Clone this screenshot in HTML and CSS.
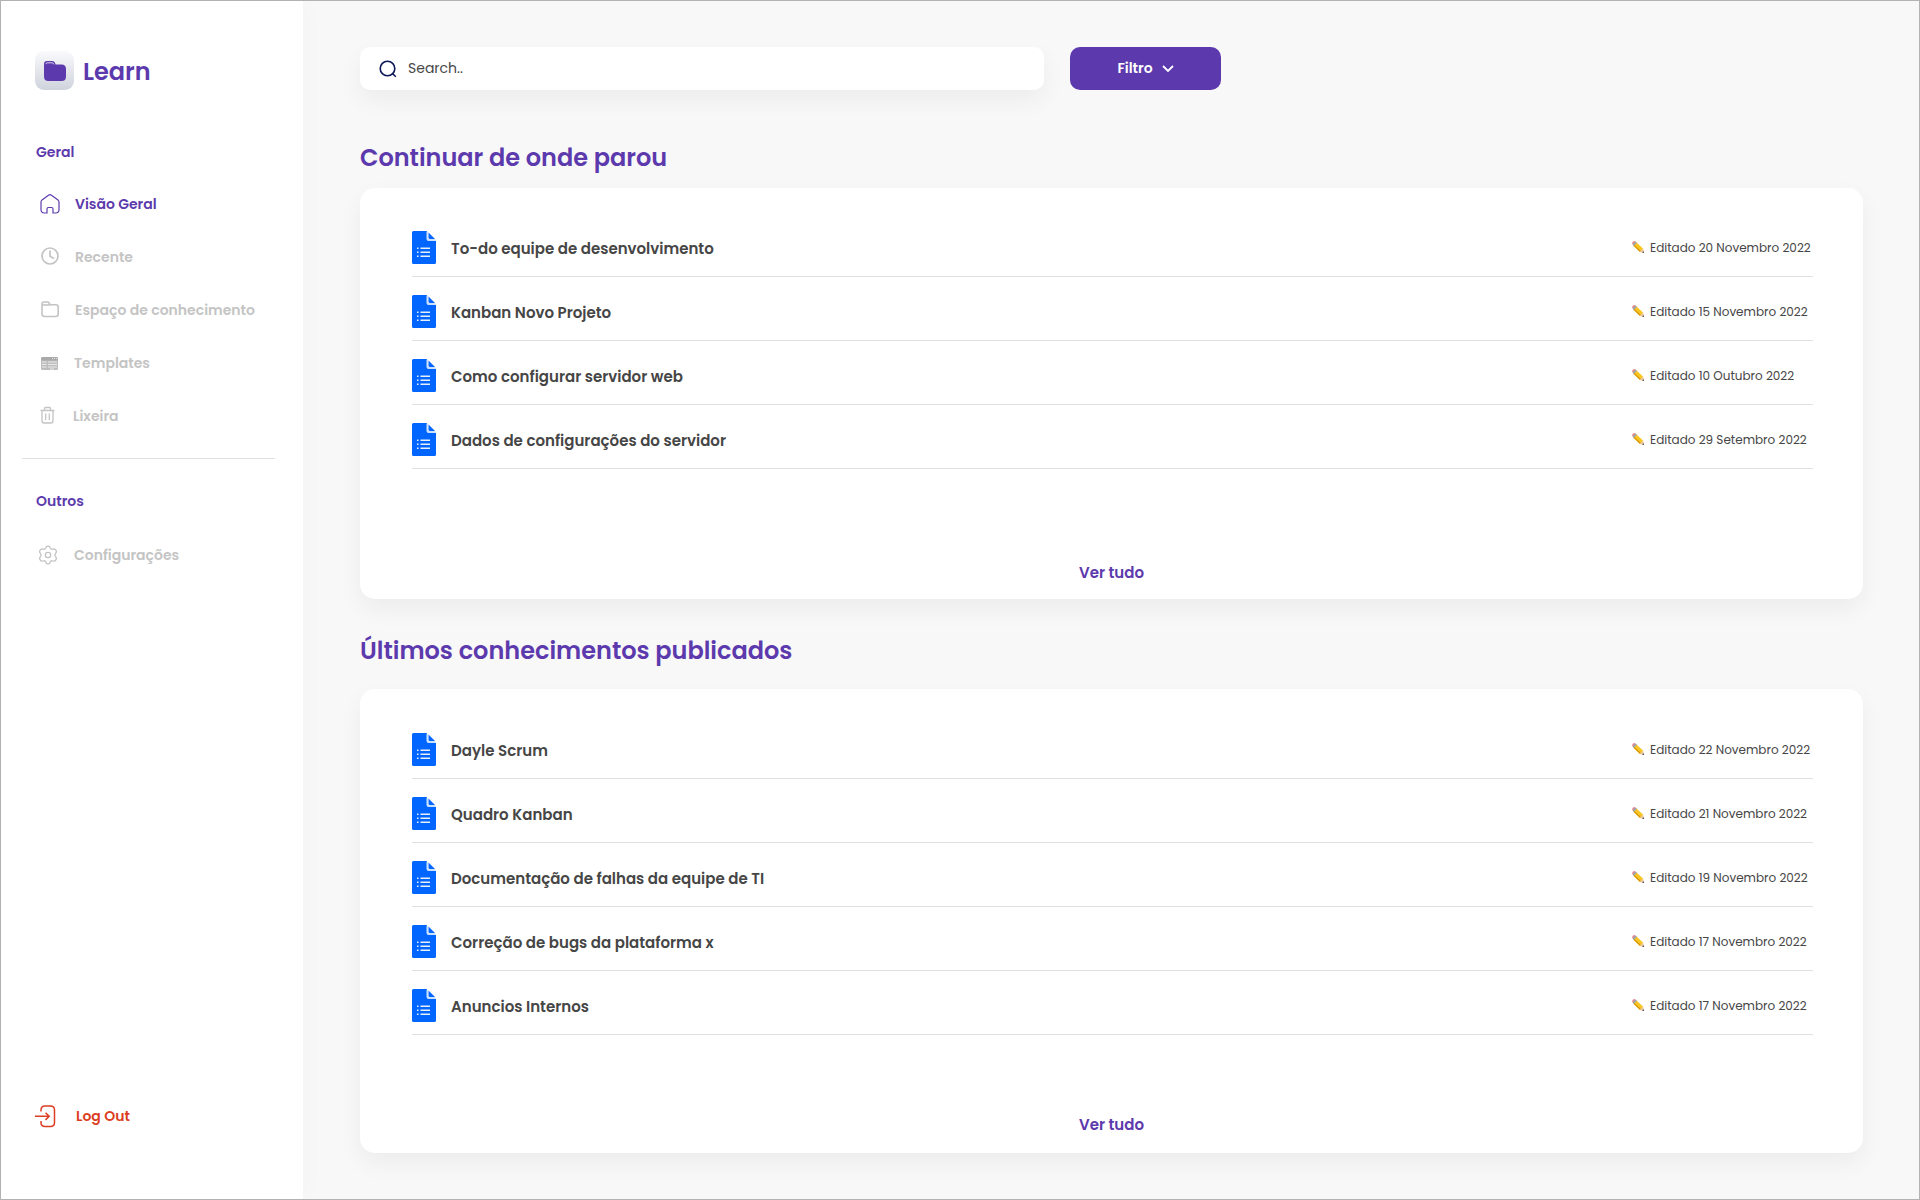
FILE: index.html
```html
<!DOCTYPE html>
<html lang="pt-BR">
<head>
<meta charset="utf-8">
<meta name="viewport" content="width=device-width, initial-scale=1">
<title>Learn</title>
<link rel="stylesheet" href="styles.css">
</head>
<body>
<svg class="sprite" aria-hidden="true">
  <symbol id="doc" viewBox="0 0 24 33">
    <path fill="#0066ff" d="M1.500 0H15v8.500L16.500 10H24v21.500a1.500 1.500 0 0 1-1.500 1.500h-21A1.500 1.500 0 0 1 0 31.500v-30A1.500 1.500 0 0 1 1.500 0z"/>
    <path fill="#cce0ff" d="M14.500 0.500v7q0 2.500 2.500 2.500h7L23 8h-5.500Q16 8 16 6.500V1z"/>
    <path fill="#0066ff" d="M16.500 1.500L23 8h-5q-1.500 0-1.500-1.500z"/>
    <path stroke="#e6f0ff" stroke-width="1.500" d="M5 17.300h1.500M8.500 17.300H18M5 21.300h1.500M8.500 21.300H18M5 25.300h1.500M8.500 25.300H18"/>
  </symbol>
  <symbol id="pencil" viewBox="0 0 12 12">
    <path fill="#e58a94" d="M.6 3.400Q-.4 2 .8.800T3.400.500L4.600 1.500 1.600 4.500z"/>
    <path fill="#9aa5ad" d="M3.500.6l1.900 1.600-3.200 3.200L.7 3.700z"/>
    <path fill="#f9c623" d="M4.900 1.700l6.300 6L8 11 1.700 4.900z"/>
    <path fill="#d99a12" d="M1.700 4.900l.9-.9 6.300 6.100L8 11z"/>
    <path fill="#e8c09a" d="M11.200 7.700l.8 4.300-4-1z"/>
    <path fill="#333" d="M11.700 10.200l.3 1.800-1.800-.4z"/>
  </symbol>
</svg>

<div class="app">
  <aside class="sidebar">
    <a class="brand" href="#">
      <span class="brand-mark">
        <svg width="22" height="20" viewBox="0 0 22 20"><path fill="#5c3aad" d="M3 0h5.500q1.700 0 2.300 1.500l.9 2H17.500Q22 3.500 22 8v7.500Q22 20 17.500 20h-13Q0 20 0 15.500V3Q0 0 3 0z"/><path fill="none" stroke="#d9d2ec" d="M2 3.200q0-1.400 1.200-1.400h5q1.200 0 1.600 1.600"/></svg>
      </span>
      <span class="brand-name">Learn</span>
    </a>

    <nav class="menu">
      <h3 class="menu-title">Geral</h3>
      <ul class="menu-list">
        <li><a class="menu-link active" href="#">
          <svg width="20" height="20" viewBox="0 0 20 20" fill="none" stroke="currentColor" stroke-width="1.200"><path d="M7 19H4.500Q1 19 1 15.500V8q0-1.300 1-2.100l6.500-4.700q1.500-1 3 0L18 5.900q1 .8 1 2.100v7.500q0 3.500-3.500 3.500H13v-4q0-1.500-1.500-1.500h-3Q7 13.500 7 15z"/></svg>
          Visão Geral</a></li>
        <li><a class="menu-link" href="#">
          <svg width="20" height="20" viewBox="0 0 20 20" fill="none" stroke="currentColor" stroke-width="1.700"><circle cx="10" cy="9" r="8"/><path d="M10 4v5.200l3.500 2" stroke-linecap="round"/></svg>
          Recente</a></li>
        <li><a class="menu-link" href="#">
          <svg width="20" height="20" viewBox="0 0 20 20" fill="none" stroke="currentColor" stroke-width="1.600"><path d="M2 6V4q0-2 2-2h3.500q1 0 1.500 1l1 1.700h6q2.200 0 2.200 2.300v7q0 2.500-2.500 2.500H4.500Q2 16.500 2 14z"/><path d="M2 5h8"/></svg>
          Espaço de conhecimento</a></li>
        <li><a class="menu-link" href="#">
          <svg width="19" height="20" viewBox="0 0 19 20"><rect x="1" y="4" width="17" height="13" rx="1.500" fill="#bdbdbd"/><path d="M1 7.500v-2Q1 4 2.500 4h14Q18 4 18 5.500v2z" fill="#a9a9a9"/><path stroke="#fff" stroke-width=".7" d="M12 5.500h1M14 5.500h1M16 5.500h1M2 9h4.500M2 11.500h4.500M2 14h4.500M8 9h9M8 11.500h9M8 14h9M10 16h4"/></svg>
          Templates</a></li>
        <li><a class="menu-link" href="#">
          <svg width="18" height="20" viewBox="0 0 18 20" fill="none" stroke="currentColor" stroke-width="1.300"><path d="M0.500 4.500h14M4.500 4V2.500q0-1 1-1h4q1 0 1 1V4M2 4.500V15q0 2 2 2h7q2 0 2-2V4.500M5.700 7.500v6.500M9.300 7.500v6.500"/></svg>
          Lixeira</a></li>
      </ul>
    </nav>

    <nav class="menu menu-secondary">
      <h3 class="menu-title">Outros</h3>
      <ul class="menu-list">
        <li><a class="menu-link" href="#">
          <svg width="20" height="20" viewBox="0 0 20 20" fill="none" stroke="currentColor" stroke-width="1.300"><circle cx="9" cy="10" r="2.700"/><path d="M7.300 1.800q1.700-1.400 3.400 0l.7 1.700q.7 1 2 .7l1.700-.3q1.700.2 2.300 2.300.2 1.100-.8 2.100-1.300 1.700 0 3.400 1 1 .8 2.100-.6 2.100-2.300 2.300l-1.700-.3q-1.300-.3-2 .7l-.7 1.700q-1.700 1.400-3.400 0l-.7-1.700q-.7-1-2-.7l-1.700.3Q1.200 15.900.6 13.800q-.2-1.100.8-2.100 1.300-1.700 0-3.400-1-1-.8-2.100.6-2.100 2.300-2.300l1.700.3q1.300.3 2-.7z"/></svg>
          Configurações</a></li>
      </ul>
    </nav>

    <button class="logout" type="button">
      <svg width="22" height="24" viewBox="0 0 22 24" fill="none" stroke="currentColor" stroke-width="1.500"><path d="M6 7.500V6q0-4 4-4h5.500q4 0 4 4v12.500q0 4-4 4H10q-4 0-4-4V17M0 12.300h14M10.500 8.700l3.700 3.600-3.700 3.600"/></svg>
      Log Out
    </button>
  </aside>

  <main class="main">
    <form class="toolbar" role="search">
      <label class="search">
        <svg width="18" height="18" viewBox="0 0 18 18" fill="none" stroke="#0b1757" stroke-width="1.600"><circle cx="8.500" cy="8.500" r="7.300"/><path d="M13.500 13.500l3.300 3.300"/></svg>
        <input type="search" placeholder="Search.." aria-label="Search">
      </label>
      <button class="filter" type="button">Filtro
        <svg width="12" height="8" viewBox="0 0 12 8" fill="none" stroke="currentColor" stroke-width="1.800"><path d="M1 1l5 5 5-5"/></svg>
      </button>
    </form>

    <section class="section">
      <h2 class="section-title">Continuar de onde parou</h2>
      <div class="card">
        <ul class="docs">
          <li class="doc"><svg class="doc-icon"><use href="#doc"/></svg><a class="doc-name" href="#">To-do equipe de desenvolvimento</a><span class="doc-date"><svg class="pencil"><use href="#pencil"/></svg>Editado 20 Novembro 2022</span></li>
          <li class="doc"><svg class="doc-icon"><use href="#doc"/></svg><a class="doc-name" href="#">Kanban Novo Projeto</a><span class="doc-date"><svg class="pencil"><use href="#pencil"/></svg>Editado 15 Novembro 2022</span></li>
          <li class="doc"><svg class="doc-icon"><use href="#doc"/></svg><a class="doc-name" href="#">Como configurar servidor web</a><span class="doc-date"><svg class="pencil"><use href="#pencil"/></svg>Editado 10 Outubro 2022</span></li>
          <li class="doc"><svg class="doc-icon"><use href="#doc"/></svg><a class="doc-name" href="#">Dados de configurações do servidor</a><span class="doc-date"><svg class="pencil"><use href="#pencil"/></svg>Editado 29 Setembro 2022</span></li>
        </ul>
        <a class="see-all" href="#">Ver tudo</a>
      </div>
    </section>

    <section class="section section-latest">
      <h2 class="section-title">Últimos conhecimentos publicados</h2>
      <div class="card">
        <ul class="docs">
          <li class="doc"><svg class="doc-icon"><use href="#doc"/></svg><a class="doc-name" href="#">Dayle Scrum</a><span class="doc-date"><svg class="pencil"><use href="#pencil"/></svg>Editado 22 Novembro 2022</span></li>
          <li class="doc"><svg class="doc-icon"><use href="#doc"/></svg><a class="doc-name" href="#">Quadro Kanban</a><span class="doc-date"><svg class="pencil"><use href="#pencil"/></svg>Editado 21 Novembro 2022</span></li>
          <li class="doc"><svg class="doc-icon"><use href="#doc"/></svg><a class="doc-name" href="#">Documentação de falhas da equipe de TI</a><span class="doc-date"><svg class="pencil"><use href="#pencil"/></svg>Editado 19 Novembro 2022</span></li>
          <li class="doc"><svg class="doc-icon"><use href="#doc"/></svg><a class="doc-name" href="#">Correção de bugs da plataforma x</a><span class="doc-date"><svg class="pencil"><use href="#pencil"/></svg>Editado 17 Novembro 2022</span></li>
          <li class="doc"><svg class="doc-icon"><use href="#doc"/></svg><a class="doc-name" href="#">Anuncios Internos</a><span class="doc-date"><svg class="pencil"><use href="#pencil"/></svg>Editado 17 Novembro 2022</span></li>
        </ul>
        <a class="see-all" href="#">Ver tudo</a>
      </div>
    </section>
  </main>
</div>
</body>
</html>
```
FILE: styles.css
```css
:root {
  --purple: #5c3aad;
  --muted: #c4c4c4;
  --text: #464646;
  --line: #e0e0e0;
  --shadow: 0 10px 24px rgba(0, 0, 0, 0.05);
}

* { box-sizing: border-box; }

body {
  margin: 0;
  background: #f8f8f8;
  color: var(--text);
  font-family: Poppins, Inter, sans-serif;
  font-size: 14px;
}

a { color: inherit; text-decoration: none; }
ul { list-style: none; margin: 0; padding: 0; }
h2, h3 { margin: 0; font-weight: 600; color: var(--purple); }
button, input { font: inherit; }
svg { flex: none; }

.sprite { display: none; }

.app {
  display: flex;
  min-height: 100vh;
  border: 1px solid #b3b3b3;
}

/* Sidebar */
.sidebar {
  display: flex;
  flex-direction: column;
  flex: none;
  width: 302px;
  padding: 50px 28px 68px 21px;
  background: #fff;
  box-shadow: 4px 0 24px rgba(0, 0, 0, 0.02);
}

.brand {
  display: flex;
  align-items: center;
  gap: 9px;
  padding-left: 13px;
}

.brand-mark {
  display: grid;
  place-items: center;
  width: 39px;
  height: 39px;
  border-radius: 9px;
  background: linear-gradient(#fafafc, #cfd3dc);
}

.brand-name {
  padding-top: 2px;
  font-size: 24px;
  line-height: 36px;
  font-weight: 600;
  color: var(--purple);
}

.menu { padding-top: 51px; }

.menu-title {
  padding-left: 14px;
  font-size: 14px;
  line-height: 22px;
}

.menu-list {
  display: flex;
  flex-direction: column;
  gap: 31px;
  padding: 30px 0 0 18px;
}

.menu-link {
  display: flex;
  align-items: center;
  gap: 15px;
  line-height: 22px;
  font-weight: 600;
  color: var(--muted);
  white-space: nowrap;
}

.menu-link.active { color: var(--purple); }

.menu-secondary {
  margin-top: 31px;
  padding-top: 31px;
  border-top: 1px solid var(--line);
}

.menu-secondary .menu-list { padding: 32px 0 0 17px; }

.logout {
  display: flex;
  align-items: center;
  gap: 19px;
  margin-top: auto;
  padding: 0 0 0 13px;
  border: 0;
  background: none;
  color: #dc3e22;
  font-weight: 600;
  line-height: 30px;
}

/* Content */
.main {
  flex: 1;
  min-width: 0;
  padding: 46px 56px 45px 57px;
}

.toolbar {
  display: flex;
  gap: 26px;
}

.search {
  display: flex;
  align-items: center;
  gap: 11px;
  flex: 0 1 684px;
  height: 43px;
  padding: 0 19px;
  border-radius: 10px;
  background: #fff;
  box-shadow: var(--shadow);
}

.search input {
  flex: 1;
  min-width: 0;
  padding: 0;
  border: 0;
  outline: 0;
  background: none;
  color: var(--text);
}

.search input::placeholder { color: var(--text); opacity: 1; }

.filter {
  display: flex;
  align-items: center;
  justify-content: center;
  gap: 9px;
  width: 151px;
  height: 43px;
  border: 0;
  border-radius: 10px;
  background: var(--purple);
  color: #fff;
  font-weight: 600;
}

.section { padding-top: 50px; }

.section-title {
  font-size: 24px;
  line-height: 36px;
}

.card {
  display: flex;
  flex-direction: column;
  margin-top: 12px;
  padding: 25px 50px 14px;
  border-radius: 15px;
  background: #fff;
  box-shadow: var(--shadow);
}

.docs { padding-left: 2px; }

.see-all {
  align-self: center;
  margin-top: 92px;
  font-size: 15px;
  line-height: 24px;
  font-weight: 600;
  color: var(--purple);
}

.section-latest { padding-top: 34px; }
.section-latest .card { margin-top: 20px; padding: 26px 50px 16px; }
.section-latest .see-all { margin-top: 78px; }

.doc {
  display: flex;
  align-items: center;
  height: 64px;
  padding-top: 6px;
  border-bottom: 1px solid var(--line);
}

.doc-icon { width: 24px; height: 33px; }

.doc-name {
  flex: 1;
  min-width: 0;
  padding: 2px 0 0 15px;
  font-size: 15px;
  line-height: 24px;
  font-weight: 600;
}

.doc-date {
  display: flex;
  align-items: center;
  gap: 6px;
  width: 181px;
  font-size: 12px;
  line-height: 20px;
  white-space: nowrap;
}

.pencil { width: 12px; height: 12px; margin-bottom: 2px; }
```
